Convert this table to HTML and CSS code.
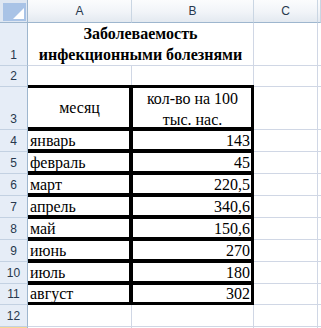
FILE: index.html
```html
<!DOCTYPE html>
<html lang="ru">
<head>
<meta charset="utf-8">
<title>Заболеваемость</title>
<link rel="stylesheet" href="styles.css">
</head>
<body>
<div class="sheet">
  <div class="corner"><div class="corner-box"><svg class="tri" width="11" height="11" viewBox="0 0 11 11"><polygon points="11,0 11,11 0,11" fill="#ffffff"/></svg></div></div>
  <div class="ch">A</div><div class="ch">B</div><div class="ch">C</div><div class="ch"></div>

  <div class="rh">1</div><div class="c title">Заболеваемость<br>инфекционными болезнями</div><div class="c"></div><div class="c"></div>
  <div class="rh">2</div><div class="c"></div><div class="c"></div><div class="c"></div><div class="c"></div>
  <div class="rh">3</div><div class="c t ta mid">месяц</div><div class="c t mid two">кол-во на 100<br>тыс. нас.</div><div class="c"></div><div class="c"></div>
  <div class="rh">4</div><div class="c t ta">январь</div><div class="c t num">143</div><div class="c"></div><div class="c"></div>
  <div class="rh">5</div><div class="c t ta">февраль</div><div class="c t num">45</div><div class="c"></div><div class="c"></div>
  <div class="rh">6</div><div class="c t ta">март</div><div class="c t num">220,5</div><div class="c"></div><div class="c"></div>
  <div class="rh">7</div><div class="c t ta">апрель</div><div class="c t num">340,6</div><div class="c"></div><div class="c"></div>
  <div class="rh">8</div><div class="c t ta">май</div><div class="c t num">150,6</div><div class="c"></div><div class="c"></div>
  <div class="rh">9</div><div class="c t ta">июнь</div><div class="c t num">270</div><div class="c"></div><div class="c"></div>
  <div class="rh">10</div><div class="c t ta">июль</div><div class="c t num">180</div><div class="c"></div><div class="c"></div>
  <div class="rh">11</div><div class="c t ta">август</div><div class="c t num">302</div><div class="c"></div><div class="c"></div>
  <div class="rh">12</div><div class="c"></div><div class="c"></div><div class="c"></div><div class="c"></div>
  <div class="rh active"></div><div class="c"></div><div class="c"></div><div class="c"></div><div class="c"></div>
</div>
</body>
</html>
```

FILE: styles.css
```css
html, body {
  margin: 0;
  padding: 0;
  background: #ffffff;
  overflow: hidden;
}
.sheet {
  display: grid;
  grid-template-columns: 28px 104px 122px 64px 3px;
  grid-template-rows: 23px 43px 21px 43px 22px 22px 22px 22px 22px 22px 22px 21px 22px 1px;
  width: 321px;
  height: 328px;
  overflow: hidden;
  font-family: "Liberation Serif", "Times New Roman", serif;
  font-size: 16px;
  color: #000000;
}
.sheet > div {
  box-sizing: border-box;
  min-width: 0;
}
.corner {
  background: #dfe7f2;
  border-right: 1px solid #9eb6ce;
  border-bottom: 1px solid #9eb6ce;
  padding: 3px 1px 1px 3px;
  position: relative;
  z-index: 3;
}
.corner-box {
  width: 100%;
  height: 100%;
  background: #a9c3e6;
  position: relative;
}
.tri {
  position: absolute;
  right: 2px;
  bottom: 2px;
}
.ch {
  background: linear-gradient(to bottom, #fbfcfd 0%, #f1f4f8 55%, #e3e9f0 100%);
  border-right: 1px solid #cad6e3;
  border-bottom: 1px solid #9eb6ce;
  font-family: "Liberation Sans", Arial, sans-serif;
  font-size: 12px;
  color: #27384d;
  display: flex;
  align-items: flex-end;
  justify-content: center;
  padding-bottom: 4px;
  line-height: 14px;
}
.rh {
  background: #e6edf7;
  border-right: 1px solid #9eb6ce;
  border-bottom: 1px solid #c3d1e2;
  font-family: "Liberation Sans", Arial, sans-serif;
  font-size: 12px;
  color: #27384d;
  display: flex;
  align-items: flex-end;
  justify-content: center;
  padding-bottom: 3px;
  line-height: 14px;
  position: relative;
  z-index: 3;
}
.rh.active {
  background: linear-gradient(to bottom, #f9d99f, #f1c15f);
  border-bottom: 0;
}
.c {
  border-right: 1px solid #d0d7e5;
  border-bottom: 1px solid #d0d7e5;
  display: flex;
  align-items: flex-end;
  padding: 0 2px 1px 2px;
  line-height: 18px;
  white-space: nowrap;
  position: relative;
}
.title {
  grid-column: span 2;
  font-weight: bold;
  justify-content: center;
  text-align: center;
  line-height: 21px;
  padding-bottom: 0;
}
.mid {
  align-items: center;
  justify-content: center;
  text-align: center;
}
.two {
  line-height: 21px;
  padding: 1px 2px 0 2px;
}
.num {
  justify-content: flex-end;
  padding-right: 3px;
}
.t::after {
  content: "";
  position: absolute;
  left: -2px;
  top: -2px;
  right: -1px;
  bottom: -1px;
  border: 3px solid #000000;
  pointer-events: none;
  z-index: 1;
}
.ta::after {
  border-left: 0;
}
```
